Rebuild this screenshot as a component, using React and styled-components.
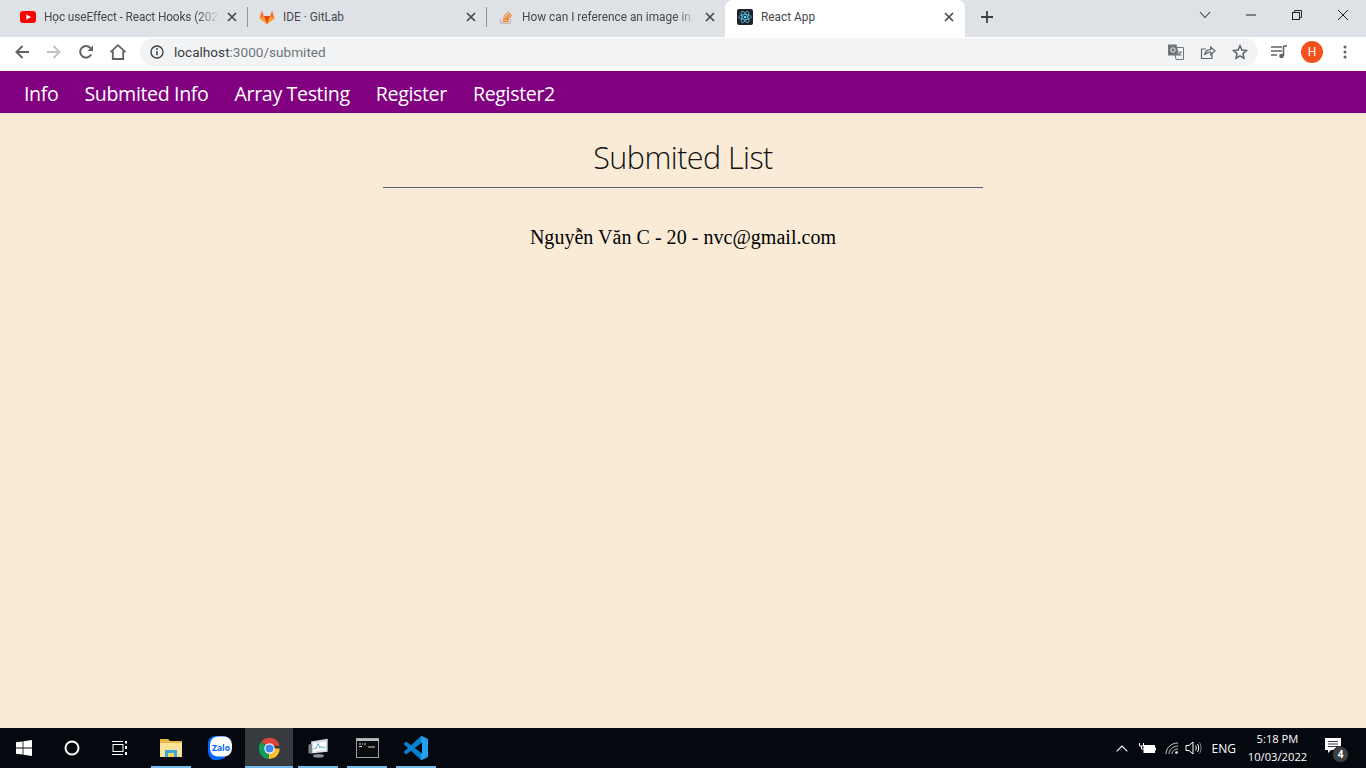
import React from "react";
import styled, { createGlobalStyle } from "styled-components";

const Global = createGlobalStyle`
  html, body { margin: 0; padding: 0; height: 100%; }
  body { background: #faebd7; overflow: hidden; }
  #root { height: 100%; }
`;

const Screen = styled.div`
  width: 1366px;
  height: 768px;
  display: flex;
  flex-direction: column;
  overflow: hidden;
`;

const TabStrip = styled.div`
  height: 37px;
  flex: none;
  background: #dee1e6;
  display: flex;
  padding-left: 9px;
`;

const Tab = styled.div`
  flex: none;
  width: ${(p) => p.$width}px;
  height: ${(p) => (p.$active ? 37 : 34)}px;
  display: flex;
  align-items: center;
  padding: 0 ${(p) => p.$pr || 10}px ${(p) => (p.$active ? 3 : 0)}px ${(p) => (p.$active ? 12 : 11)}px;
  box-sizing: border-box;
  background: ${(p) => (p.$active ? "#fff" : "transparent")};
  border-radius: ${(p) => (p.$active ? "8px 8px 0 0" : "0")};
  gap: 8px;
`;

const TabDivider = styled.span`
  flex: none;
  width: 1px;
  height: 20px;
  margin-top: 7px;
  background: #8f9398;
`;

const TabTitle = styled.span`
  flex: 1;
  min-width: 0;
  overflow: hidden;
  white-space: nowrap;
  font: 11.85px "Roboto", "Liberation Sans", sans-serif;
  letter-spacing: ${(p) => p.$spacing || 0}px;
  color: #45494e;
  ${(p) => p.$fade && `-webkit-mask-image: linear-gradient(90deg, #000 88%, transparent 100%);`}
`;

const Spacer = styled.div`
  flex: 1;
`;

const WindowControls = styled.div`
  display: flex;
  align-items: flex-start;
`;

const WindowButton = styled.div`
  width: 46px;
  height: 30px;
  display: flex;
  align-items: center;
  justify-content: center;
`;

const NewTab = styled.div`
  width: 28px;
  height: 34px;
  margin-left: 8px;
  display: flex;
  align-items: center;
  justify-content: center;
`;

const Toolbar = styled.div`
  height: 34px;
  flex: none;
  background: #fff;
  display: flex;
  align-items: flex-start;
  padding: 1px 0 0 6px;
  box-sizing: border-box;
`;

const NavIcon = styled.div`
  width: 32px;
  height: 28px;
  flex: none;
  margin-left: ${(p) => p.$ml || 0}px;
  display: flex;
  align-items: center;
  justify-content: center;
`;

const Omnibox = styled.div`
  width: 1118px;
  height: 28px;
  margin-left: 6px;
  flex: none;
  border-radius: 14px;
  background: #f1f3f4;
  display: flex;
  align-items: center;
  padding: 0 2px 0 10px;
  box-sizing: border-box;
`;

const Url = styled.span`
  margin-left: 10px;
  font: 13.6px "Roboto", "Liberation Sans", sans-serif;
  color: #70757a;
  span { color: #3c4043; }
`;

const OmniIcon = styled.div`
  width: 32px;
  height: 24px;
  display: flex;
  align-items: center;
  justify-content: center;
`;

const Avatar = styled.div`
  width: 22px;
  height: 22px;
  margin: 3px 0 0 6px;
  flex: none;
  border-radius: 50%;
  background: #f4511e;
  color: #fff;
  font: 400 12px "Roboto", sans-serif;
  display: flex;
  align-items: center;
  justify-content: center;
`;

const NavBar = styled.nav`
  height: 42px;
  flex: none;
  box-sizing: border-box;
  padding: 3px 0 0 24px;
  background: #800080;
  display: flex;
  align-items: center;
  gap: 26px;
`;

const NavLink = styled.a`
  color: #fff;
  font: 400 19.6px "Open Sans", sans-serif;
  letter-spacing: -0.36px;
  white-space: nowrap;
`;

const Main = styled.main`
  flex: 1;
  background: #faebd7;
  display: flex;
  flex-direction: column;
  align-items: center;
`;

const Heading = styled.h1`
  width: 600px;
  height: 75px;
  margin: 0;
  box-sizing: border-box;
  padding-top: 22px;
  border-bottom: 1px solid #5a5f75;
  text-align: center;
  font: 300 30.5px/45px "Open Sans", sans-serif;
  letter-spacing: -0.55px;
  color: #111;
`;

const Entry = styled.p`
  margin: 36px 0 0;
  font: 20px/26px "Liberation Serif", "Times New Roman", serif;
  letter-spacing: 0.03px;
  color: #000;
`;

const Taskbar = styled.footer`
  height: 40px;
  flex: none;
  background: #05090f;
  display: flex;
  align-items: stretch;
`;

const TaskIcon = styled.div`
  width: 48px;
  flex: none;
  position: relative;
  display: flex;
  align-items: center;
  justify-content: center;
  background: ${(p) => (p.$active ? "#36393d" : "transparent")};
  margin-right: ${(p) => p.$mr || 0}px;
  ${(p) =>
    p.$open &&
    `&::after { content: ""; position: absolute; left: ${p.$active ? 0 : 4}px; right: ${p.$active ? 0 : 4}px; bottom: 0; height: 2px; background: #76b9ed; }`}
`;

const Tray = styled.div`
  display: flex;
  align-items: center;
  margin-left: auto;
  padding-right: 13px;
`;

const TrayItem = styled.div`
  width: ${(p) => p.$w}px;
  flex: none;
  margin-right: ${(p) => p.$mr || 0}px;
  display: flex;
  align-items: center;
  justify-content: center;
`;

const TrayText = styled.span`
  font: 12px "Open Sans", "Liberation Sans", sans-serif;
  color: #fff;
  margin-left: 3px;
`;

const Clock = styled.div`
  width: 71px;
  margin-left: 6px;
  text-align: center;
  font: 11.2px/18px "Open Sans", "Liberation Sans", sans-serif;
  color: #fff;
`;

const Notify = styled.div`
  position: relative;
  width: 40px;
  height: 40px;
  display: flex;
  align-items: center;
  justify-content: center;
`;

const Badge = styled.span`
  position: absolute;
  left: 19px;
  top: 18px;
  width: 15px;
  height: 15px;
  border-radius: 50%;
  background: #3d3f42;
  border: 1px solid #0c0c0c;
  color: #fff;
  font: 700 10px/15px "Open Sans", sans-serif;
  text-align: center;
`;

const Glyph = styled.svg`
  flex: none;
`;

const MessageGlyph = styled.svg`
  flex: none;
  margin-bottom: 5px;
`;

const Close = () => (
  <Glyph width="10" height="10" viewBox="0 0 10 10">
    <path d="M1 1l8 8M9 1l-8 8" stroke="#45494e" strokeWidth="1.7" />
  </Glyph>
);

const YouTube = () => (
  <Glyph width="16" height="12" viewBox="0 0 16 12">
    <rect width="16" height="12" rx="3" fill="#f00" />
    <path d="M6.3 3.3v5.4L11 6z" fill="#fff" />
  </Glyph>
);

const GitLab = () => (
  <Glyph width="16" height="16" viewBox="0 0 16 16">
    <path d="M8 15L.6 9.4 2.9 1.6l2 5.4h6.2l2-5.4 2.3 7.8z" fill="#fc6d26" />
    <path d="M8 15L4.9 7h6.2z" fill="#e24329" />
    <path d="M8 15L.6 9.4 4.9 7z" fill="#fca326" />
    <path d="M8 15l7.4-5.6L11.1 7z" fill="#fca326" />
  </Glyph>
);

const StackOverflow = () => (
  <Glyph width="16" height="16" viewBox="0 0 16 16">
    <path d="M2.5 10v4.5h10V10" fill="none" stroke="#bcbbbb" strokeWidth="1.2" />
    <path d="M4.5 12.6h6M4.7 10.6l6 .6M5.2 8.6l5.8 1.5M6.2 6.4l5.3 2.8M7.8 4.3l4.6 3.9M10 2.5l3.4 4.8" stroke="#f48024" strokeWidth="1.2" />
  </Glyph>
);

const ReactLogo = () => (
  <Glyph width="16" height="16" viewBox="0 0 16 16">
    <rect width="16" height="16" rx="2" fill="#20232a" />
    <g fill="none" stroke="#61dafb" strokeWidth="0.7">
      <ellipse cx="8" cy="8" rx="6.3" ry="2.5" />
      <ellipse cx="8" cy="8" rx="6.3" ry="2.5" transform="rotate(60 8 8)" />
      <ellipse cx="8" cy="8" rx="6.3" ry="2.5" transform="rotate(120 8 8)" />
    </g>
    <circle cx="8" cy="8" r="1.3" fill="#61dafb" />
  </Glyph>
);

const G = "#5f6368";

const Back = () => (
  <svg width="16" height="16" viewBox="0 0 16 16">
    <path d="M15 8H2.5M8.5 2L2.5 8l6 6" fill="none" stroke={G} strokeWidth="2" />
  </svg>
);

const Forward = () => (
  <svg width="16" height="16" viewBox="0 0 16 16">
    <path d="M1 8h12.5M7.5 2l6 6-6 6" fill="none" stroke="#bdc1c6" strokeWidth="2" />
  </svg>
);

const Reload = () => (
  <svg width="16" height="16" viewBox="0 0 16 16">
    <path d="M13.2 10.4A5.8 5.8 0 1 1 12.4 4" fill="none" stroke={G} strokeWidth="2" />
    <path d="M15 1.5V7H9.5z" fill={G} />
  </svg>
);

const Home = () => (
  <svg width="18" height="18" viewBox="0 0 18 18">
    <path d="M1.5 9.2L9 2.2l7.5 7M3.8 8v8h10.400V8" fill="none" stroke={G} strokeWidth="1.8" />
  </svg>
);

const Info = () => (
  <svg width="14" height="14" viewBox="0 0 14 14">
    <circle cx="7" cy="7" r="6" fill="none" stroke="#3c4043" strokeWidth="1.4" />
    <path d="M7 6v4.2" stroke="#3c4043" strokeWidth="1.5" />
    <circle cx="7" cy="4" r="0.9" fill="#3c4043" />
  </svg>
);

const Translate = () => (
  <svg width="16" height="16" viewBox="0 0 16 16">
    <path d="M6 3.5h9.5v12H8z" fill="#f1f3f4" stroke="#70757a" />
    <path d="M0 .5h8.5L11 11.5H0z" fill="#70757a" />
    <circle cx="5" cy="6" r="2.2" fill="none" stroke="#f1f3f4" strokeWidth="1" />
    <path d="M10.5 8h3.5M13 8l-2 4M11 9l2.5 3" stroke="#70757a" strokeWidth="0.9" fill="none" />
  </svg>
);

const Share = () => (
  <svg width="16" height="16" viewBox="0 0 16 16">
    <path d="M12 9.5V14.5H1.5V5H6" fill="none" stroke={G} strokeWidth="1.2" />
    <path d="M4.5 11c.6-3.5 3-5.4 6.2-5.4V3L15 6.800l-4.300 3.800V8C8 8 6 9 4.500 11z" fill="none" stroke={G} strokeWidth="1.2" />
  </svg>
);

const Star = () => (
  <svg width="16" height="16" viewBox="0 0 16 16">
    <path d="M8 1.8l1.900 4.300 4.600.4-3.500 3.100 1 4.600L8 11.800l-4 2.400 1-4.600L1.500 6.500l4.600-.4z" fill="none" stroke="#5f6368" strokeWidth="1.5" />
  </svg>
);

const Media = () => (
  <svg width="16" height="14" viewBox="0 0 16 14">
    <path d="M0 2h11M0 6h11M0 10h6" stroke={G} strokeWidth="1.3" />
    <path d="M12.5 1v10" stroke={G} strokeWidth="1.6" />
    <path d="M12.5 1H16" stroke={G} strokeWidth="1.6" />
    <circle cx="10.5" cy="11" r="2.3" fill={G} />
  </svg>
);

const Dots = () => (
  <svg width="4" height="14" viewBox="0 0 4 14">
    <circle cx="2" cy="2" r="1.5" fill={G} />
    <circle cx="2" cy="7" r="1.5" fill={G} />
    <circle cx="2" cy="12" r="1.5" fill={G} />
  </svg>
);

const Chevron = () => (
  <svg width="12" height="8" viewBox="0 0 12 8">
    <path d="M1 1l5 5.5L11 1" fill="none" stroke="#3c4043" strokeWidth="1.1" />
  </svg>
);

const Minimize = () => (
  <svg width="10" height="2" viewBox="0 0 10 2">
    <path d="M0 1h10" stroke="#222" strokeWidth="1" />
  </svg>
);

const Restore = () => (
  <svg width="10" height="10" viewBox="0 0 10 10">
    <path d="M2.5 2.5V.5h7v7h-2" fill="none" stroke="#222" />
    <rect x="0.5" y="2.5" width="7" height="7" fill="none" stroke="#222" />
  </svg>
);

const WinClose = () => (
  <svg width="12" height="12" viewBox="0 0 12 12">
    <path d="M1 1l10 10M11 1L1 11" stroke="#222" strokeWidth="1" />
  </svg>
);

const Plus = () => (
  <svg width="12" height="12" viewBox="0 0 12 12">
    <path d="M6 0v12M0 6h12" stroke="#3c4043" strokeWidth="1.8" />
  </svg>
);

const Windows = () => (
  <svg width="16" height="16" viewBox="0 0 16 16">
    <path d="M0 2.3L6.6 1.4v6.1H0zM7.4 1.3L16 0v7.5H7.4zM0 8.4h6.6v6.2L0 13.7zM7.4 8.4H16V16l-8.6-1.3z" fill="#fff" />
  </svg>
);

const Cortana = () => (
  <svg width="16" height="16" viewBox="0 0 16 16">
    <circle cx="8" cy="8" r="6.5" fill="none" stroke="#fff" strokeWidth="2" />
  </svg>
);

const TaskView = () => (
  <svg width="17" height="16" viewBox="0 0 17 16" fill="none" stroke="#fff" strokeWidth="1">
    <rect x="1" y="4.5" width="10" height="7" />
    <path d="M0 1.5h11M0 14.5h11" />
    <path d="M14 1v2.5M14 6v3M14 12v3" strokeWidth="2" />
  </svg>
);

const Folder = () => (
  <svg width="22" height="20" viewBox="0 0 22 20">
    <path d="M0 1h8l2 2h12v16H0z" fill="#e9b949" />
    <rect x="0" y="5" width="22" height="14" fill="#fbe39a" />
    <rect x="5" y="12" width="12" height="7" fill="#39a9dc" />
    <rect x="8" y="15" width="6" height="4" fill="#f9d65c" />
  </svg>
);

const Zalo = () => (
  <svg width="24" height="24" viewBox="0 0 24 24">
    <path d="M8 0h10l-1 22c-3 1.5-7 2-10 2-2 0-5 0-7-8V8c0-5 3-8 8-8z" fill="#0068ff" />
    <rect x="2" y="0.5" width="22" height="20" rx="8" fill="#fff" />
    <text x="13" y="14.5" textAnchor="middle" fontFamily="Open Sans, sans-serif" fontWeight="700" fontSize="8.5" fill="#0068ff">Zalo</text>
  </svg>
);

const Chrome = () => (
  <svg width="23" height="23" viewBox="0 0 24 24">
    <path d="M12 12L3.4 5A11 11 0 0 1 22.6 9H12z" fill="#db4437" />
    <path d="M12 12H22.6A11 11 0 0 1 11 23z" fill="#fbc02d" />
    <path d="M12 12l-1 11A11 11 0 0 1 3.4 5z" fill="#0f9d58" />
    <circle cx="12" cy="12" r="5.4" fill="#fff" />
    <circle cx="12" cy="12" r="4.2" fill="#4285f4" />
  </svg>
);

const Monitor = () => (
  <svg width="23" height="22" viewBox="0 0 24 24">
    <path d="M4 5l18-3v14L4 18z" fill="#d7dde0" />
    <path d="M6 7l14-2v9L6 16z" fill="#fff" />
    <path d="M6.5 13l3-1 2-5 2 5 1.5-2 1.5 2 3-1" fill="none" stroke="#5ba6cf" strokeWidth="1" />
    <ellipse cx="12" cy="20.5" rx="6" ry="2" fill="#8b9094" />
    <rect x="1" y="8" width="4" height="10" fill="#7a7f84" />
  </svg>
);

const Terminal = () => (
  <svg width="23" height="20" viewBox="0 0 23 20">
    <rect x="0.5" y="0.5" width="22" height="19" fill="#0b0b0b" stroke="#9a9da0" />
    <rect x="0.5" y="0.5" width="22" height="2.5" fill="#b9bcbf" />
    <path d="M3 6h2M6 6h1M8 6h2M3 8.5h3M12 9h7" stroke="#ddd" strokeWidth="1" />
  </svg>
);

const VSCode = () => (
  <svg width="24" height="24" viewBox="0 0 24 24">
    <defs>
      <linearGradient id="vsc" x1="0" x2="1" y1="0" y2="0">
        <stop offset="0.7" stopColor="#0a7fd0" />
        <stop offset="0.7" stopColor="#23a0ee" />
      </linearGradient>
    </defs>
    <path
      fill="url(#vsc)"
      d="M23.15 2.587L18.21.21a1.494 1.494 0 0 0-1.705.29l-9.46 8.63-4.12-3.128a.999.999 0 0 0-1.276.057L.327 7.261A1 1 0 0 0 .326 8.74L3.899 12 .326 15.26a1 1 0 0 0 .001 1.479L1.65 17.94a.999.999 0 0 0 1.276.057l4.12-3.128 9.46 8.63a1.492 1.492 0 0 0 1.704.29l4.942-2.377A1.5 1.5 0 0 0 24 20.06V3.939a1.5 1.5 0 0 0-.85-1.352zm-5.146 14.861L10.826 12l7.178-5.448v10.896z"
    />
  </svg>
);

const Caret = () => (
  <svg width="12" height="7" viewBox="0 0 12 7">
    <path d="M.7 6.3L6 1l5.3 5.3" fill="none" stroke="#fff" strokeWidth="1.1" />
  </svg>
);

const Battery = () => (
  <svg width="17" height="11" viewBox="0 0 17 11">
    <path d="M.5 0v3h4V0M2.5 3v3H5" stroke="#fff" fill="none" />
    <rect x="5" y="2.5" width="10.5" height="7" fill="#fff" stroke="#fff" />
    <rect x="16" y="4.5" width="1" height="3" fill="#fff" />
  </svg>
);

const Wifi = () => (
  <Glyph width="14" height="13" viewBox="0 0 14 13" fill="none" stroke="#c9c9c9" strokeWidth="1">
    <path d="M1 12C1 6 6 1 13 1M4 12c0-4 4-8 9-8M7 12c0-2.5 2-5 6-5" />
    <circle cx="11.5" cy="10.5" r="1.3" fill="#fff" stroke="none" />
  </Glyph>
);

const Speaker = () => (
  <svg width="17" height="14" viewBox="0 0 17 14" fill="none" stroke="#fff" strokeWidth="1">
    <path d="M1 4.5h3L8 1v12L4 9.5H1z" />
    <path d="M10.5 4.5c1 1.5 1 3.5 0 5M12.5 3c1.5 2 1.5 6 0 8" />
    <path d="M14.5 1.5c2 3 2 8 0 11" stroke="#888" />
  </svg>
);

const Message = () => (
  <MessageGlyph width="16" height="16" viewBox="0 0 16 16">
    <path d="M0 0h16v12H6l-3 3v-3H0z" fill="#fff" />
    <path d="M3 3.5h10M3 6h10M3 8.5h10" stroke="#05090f" strokeWidth="0.8" />
  </MessageGlyph>
);

export default function App() {
  return (
    <Screen>
      <Global />
      <TabStrip>
        <Tab $width={238}>
          <YouTube />
          <TabTitle $fade $spacing={-0.12}>Học useEffect - React Hooks (202</TabTitle>
          <Close />
        </Tab>
        <TabDivider />
        <Tab $width={238}>
          <GitLab />
          <TabTitle>IDE · GitLab</TabTitle>
          <Close />
        </Tab>
        <TabDivider />
        <Tab $width={238}>
          <StackOverflow />
          <TabTitle $fade>How can I reference an image in</TabTitle>
          <Close />
        </Tab>
        <Tab $active $width={240} $pr={11}>
          <ReactLogo />
          <TabTitle>React App</TabTitle>
          <Close />
        </Tab>
        <NewTab>
          <Plus />
        </NewTab>
        <Spacer />
        <WindowControls>
          <WindowButton><Chevron /></WindowButton>
          <WindowButton><Minimize /></WindowButton>
          <WindowButton><Restore /></WindowButton>
          <WindowButton><WinClose /></WindowButton>
        </WindowControls>
      </TabStrip>
      <Toolbar>
        <NavIcon><Back /></NavIcon>
        <NavIcon><Forward /></NavIcon>
        <NavIcon><Reload /></NavIcon>
        <NavIcon><Home /></NavIcon>
        <Omnibox>
          <Info />
          <Url><span>localhost</span>:3000/submited</Url>
          <Spacer />
          <OmniIcon><Translate /></OmniIcon>
          <OmniIcon><Share /></OmniIcon>
          <OmniIcon><Star /></OmniIcon>
        </Omnibox>
        <NavIcon $ml={5}><Media /></NavIcon>
        <Avatar>H</Avatar>
        <NavIcon $ml={6}><Dots /></NavIcon>
      </Toolbar>
      <NavBar>
        <NavLink>Info</NavLink>
        <NavLink>Submited Info</NavLink>
        <NavLink>Array Testing</NavLink>
        <NavLink>Register</NavLink>
        <NavLink>Register2</NavLink>
      </NavBar>
      <Main>
        <Heading>Submited List</Heading>
        <Entry>Nguyễn Văn C - 20 - nvc@gmail.com</Entry>
      </Main>
      <Taskbar>
        <TaskIcon><Windows /></TaskIcon>
        <TaskIcon><Cortana /></TaskIcon>
        <TaskIcon $mr={3}><TaskView /></TaskIcon>
        <TaskIcon $open $mr={1}><Folder /></TaskIcon>
        <TaskIcon $mr={1}><Zalo /></TaskIcon>
        <TaskIcon $open $active $mr={1}><Chrome /></TaskIcon>
        <TaskIcon $open $mr={1}><Monitor /></TaskIcon>
        <TaskIcon $open $mr={1}><Terminal /></TaskIcon>
        <TaskIcon $open><VSCode /></TaskIcon>
        <Tray>
          <TrayItem $w={20}><Caret /></TrayItem>
          <TrayItem $w={31} $mr={2}><Battery /></TrayItem>
          <Wifi />
          <TrayItem $w={30}><Speaker /></TrayItem>
          <TrayText>ENG</TrayText>
          <Clock>5:18 PM<br />10/03/2022</Clock>
          <Notify>
            <Message />
            <Badge>4</Badge>
          </Notify>
        </Tray>
      </Taskbar>
    </Screen>
  );
}
